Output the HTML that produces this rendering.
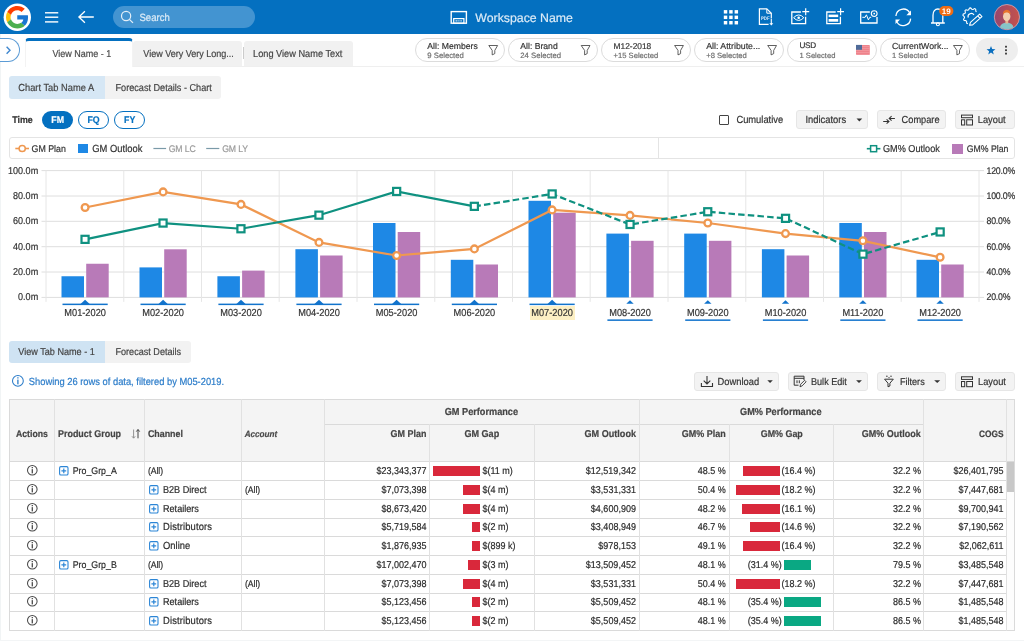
<!DOCTYPE html>
<html><head><meta charset="utf-8"><title>Workspace</title>
<style>
html,body{margin:0;padding:0;}
body{width:1024px;height:641px;overflow:hidden;background:#f3f5f6;font-family:"Liberation Sans",sans-serif;position:relative;text-rendering:geometricPrecision;-webkit-text-stroke:0.18px;}
div{box-sizing:border-box;}
svg{position:absolute;left:0;top:0;overflow:visible;}
</style></head><body><div id="root" style="position:absolute;left:0;top:0;width:1024px;height:641px;will-change:transform;">
<div style="position:absolute;left:0.00px;top:34.00px;width:1024.00px;height:606.00px;background:#fff;border-left:1px solid #f1f4f5;"></div>
<div style="position:absolute;left:0.00px;top:0.00px;width:1024.00px;height:34.00px;background:#0470c0;"></div>
<div style="position:absolute;left:112.50px;top:6.00px;width:142.20px;height:22.40px;background:#4394d1;border-radius:12px;"></div>
<div style="position:absolute;top:11.00px;height:16px;line-height:16px;font-size:9.566px;font-weight:400;color:#dcebf7;white-space:nowrap;transform:scaleY(1.1);left:139.50px;">Search</div>
<div style="position:absolute;top:10.00px;height:16px;line-height:16px;font-size:12.325px;font-weight:400;color:#dcebf7;white-space:nowrap;left:475.30px;">Workspace Name</div>
<div style="position:absolute;left:0.00px;top:38.00px;width:19.60px;height:24.00px;border:1px solid #5b9bd5;border-left:none;border-radius:0 12px 12px 0;background:#fff;"></div>
<div style="position:absolute;left:25.60px;top:66.00px;width:998.40px;height:1.00px;background:#efefef;"></div>
<div style="position:absolute;left:25.40px;top:38.00px;width:107.60px;height:29.00px;background:#fff;border-top:3px solid #0470c0;border-radius:4px 4px 0 0;border-left:1px solid #f3f3f3;border-right:1px solid #f3f3f3;"></div>
<div style="position:absolute;left:133.00px;top:41.00px;width:109.00px;height:25.40px;background:#f1f1f1;border-radius:3px 3px 0 0;"></div>
<div style="position:absolute;left:244.40px;top:41.00px;width:108.60px;height:25.40px;background:#f1f1f1;border-radius:3px 3px 0 0;"></div>
<div style="position:absolute;left:243.00px;top:47.00px;width:1.00px;height:12.00px;background:#ccc;"></div>
<div style="position:absolute;top:45.80px;height:16px;line-height:16px;font-size:9.005px;font-weight:400;color:#4a4a4a;white-space:nowrap;transform:scaleY(1.1);left:52.50px;">View Name - 1</div>
<div style="position:absolute;top:45.80px;height:16px;line-height:16px;font-size:9.03px;font-weight:400;color:#444;white-space:nowrap;transform:scaleY(1.1);left:143.30px;">View Very Very Long...</div>
<div style="position:absolute;top:45.80px;height:16px;line-height:16px;font-size:9.234px;font-weight:400;color:#444;white-space:nowrap;transform:scaleY(1.1);left:253.00px;">Long View Name Text</div>
<div style="position:absolute;left:415.00px;top:38.20px;width:90.30px;height:24.00px;border:1px solid #dcdcdc;border-radius:12px;background:#fff;"></div>
<div style="position:absolute;top:37.70px;height:16px;line-height:16px;font-size:8.668px;font-weight:400;color:#333;white-space:nowrap;left:427.30px;">All: Members</div>
<div style="position:absolute;top:47.80px;height:16px;line-height:16px;font-size:7.731px;font-weight:400;color:#6e6e6e;white-space:nowrap;left:427.30px;">9 Selected</div>
<div style="position:absolute;left:508.00px;top:38.20px;width:89.70px;height:24.00px;border:1px solid #dcdcdc;border-radius:12px;background:#fff;"></div>
<div style="position:absolute;top:37.70px;height:16px;line-height:16px;font-size:8.637px;font-weight:400;color:#333;white-space:nowrap;left:520.30px;">All: Brand</div>
<div style="position:absolute;top:47.80px;height:16px;line-height:16px;font-size:7.732px;font-weight:400;color:#6e6e6e;white-space:nowrap;left:520.30px;">24 Selected</div>
<div style="position:absolute;left:600.70px;top:38.20px;width:90.30px;height:24.00px;border:1px solid #dcdcdc;border-radius:12px;background:#fff;"></div>
<div style="position:absolute;top:37.70px;height:16px;line-height:16px;font-size:8.361px;font-weight:400;color:#333;white-space:nowrap;left:613.60px;">M12-2018</div>
<div style="position:absolute;top:47.80px;height:16px;line-height:16px;font-size:7.628px;font-weight:400;color:#6e6e6e;white-space:nowrap;left:613.60px;">+15 Selected</div>
<div style="position:absolute;left:694.20px;top:38.20px;width:89.80px;height:24.00px;border:1px solid #dcdcdc;border-radius:12px;background:#fff;"></div>
<div style="position:absolute;top:37.70px;height:16px;line-height:16px;font-size:8.78px;font-weight:400;color:#333;white-space:nowrap;left:706.20px;">All: Attribute...</div>
<div style="position:absolute;top:47.80px;height:16px;line-height:16px;font-size:7.654px;font-weight:400;color:#6e6e6e;white-space:nowrap;left:706.20px;">+8 Selected</div>
<div style="position:absolute;left:787.00px;top:38.20px;width:90.20px;height:24.00px;border:1px solid #dcdcdc;border-radius:12px;background:#fff;"></div>
<div style="position:absolute;top:37.70px;height:16px;line-height:16px;font-size:8.178px;font-weight:400;color:#333;white-space:nowrap;letter-spacing:-0.348px;left:799.50px;">USD</div>
<div style="position:absolute;top:47.80px;height:16px;line-height:16px;font-size:7.604px;font-weight:400;color:#6e6e6e;white-space:nowrap;left:799.50px;">1 Selected</div>
<div style="position:absolute;left:880.00px;top:38.20px;width:90.00px;height:24.00px;border:1px solid #dcdcdc;border-radius:12px;background:#fff;"></div>
<div style="position:absolute;top:37.70px;height:16px;line-height:16px;font-size:8.727px;font-weight:400;color:#333;white-space:nowrap;left:892.00px;">CurrentWork...</div>
<div style="position:absolute;top:47.80px;height:16px;line-height:16px;font-size:7.604px;font-weight:400;color:#6e6e6e;white-space:nowrap;left:892.00px;">1 Selected</div>
<div style="position:absolute;left:975.90px;top:38.30px;width:42.40px;height:23.40px;background:#eee;border-radius:12px;"></div>
<div style="position:absolute;left:8.90px;top:76.00px;width:95.90px;height:22.80px;background:#d6e7f5;border-radius:3px 0 0 3px;"></div>
<div style="position:absolute;left:104.80px;top:76.00px;width:116.70px;height:22.80px;background:#f2f2f2;border-radius:0 3px 3px 0;"></div>
<div style="position:absolute;top:79.60px;height:16px;line-height:16px;font-size:9.309px;font-weight:400;color:#444;white-space:nowrap;transform:scaleY(1.1);left:18.30px;">Chart Tab Name A</div>
<div style="position:absolute;top:79.60px;height:16px;line-height:16px;font-size:9.139px;font-weight:400;color:#444;white-space:nowrap;transform:scaleY(1.1);left:115.50px;">Forecast Details - Chart</div>
<div style="position:absolute;top:112.00px;height:16px;line-height:16px;font-size:8.9px;font-weight:700;color:#333;white-space:nowrap;transform:scaleY(1.1);left:12.20px;">Time</div>
<div style="position:absolute;left:42.20px;top:111.00px;width:30.90px;height:18.30px;background:#0470c0;border-radius:10px;"></div>
<div style="position:absolute;left:77.80px;top:111.00px;width:31.60px;height:18.30px;background:#fff;border:1px solid #0470c0;border-radius:10px;"></div>
<div style="position:absolute;left:114.10px;top:111.00px;width:31.20px;height:18.30px;background:#fff;border:1px solid #0470c0;border-radius:10px;"></div>
<div style="position:absolute;top:112.20px;height:16px;line-height:16px;font-size:8.8px;font-weight:700;color:#fff;white-space:nowrap;transform:scaleY(1.1);left:-92.35px;width:300px;text-align:center;">FM</div>
<div style="position:absolute;top:112.20px;height:16px;line-height:16px;font-size:8.8px;font-weight:700;color:#0470c0;white-space:nowrap;transform:scaleY(1.1);left:-56.40px;width:300px;text-align:center;">FQ</div>
<div style="position:absolute;top:112.20px;height:16px;line-height:16px;font-size:8.8px;font-weight:700;color:#0470c0;white-space:nowrap;transform:scaleY(1.1);left:-20.30px;width:300px;text-align:center;">FY</div>
<div style="position:absolute;left:719.00px;top:115.00px;width:10.40px;height:10.00px;border:1px solid #444;border-radius:1px;background:#fff;"></div>
<div style="position:absolute;top:112.00px;height:16px;line-height:16px;font-size:9.354px;font-weight:400;color:#333;white-space:nowrap;transform:scaleY(1.1);left:736.40px;">Cumulative</div>
<div style="position:absolute;left:795.90px;top:110.40px;width:72.50px;height:18.70px;background:#f3f3f3;border:1px solid #e6e6e6;border-radius:3px;"></div>
<div style="position:absolute;top:112.00px;height:16px;line-height:16px;font-size:9.38px;font-weight:400;color:#333;white-space:nowrap;letter-spacing:0.013px;transform:scaleY(1.1);left:805.40px;">Indicators</div>
<div style="position:absolute;left:876.60px;top:110.40px;width:69.60px;height:18.70px;background:#f3f3f3;border:1px solid #e6e6e6;border-radius:3px;"></div>
<div style="position:absolute;top:112.00px;height:16px;line-height:16px;font-size:9.239px;font-weight:400;color:#333;white-space:nowrap;transform:scaleY(1.1);left:901.60px;">Compare</div>
<div style="position:absolute;left:954.70px;top:110.40px;width:60.20px;height:18.70px;background:#f3f3f3;border:1px solid #e6e6e6;border-radius:3px;"></div>
<div style="position:absolute;top:112.00px;height:16px;line-height:16px;font-size:9.29px;font-weight:400;color:#333;white-space:nowrap;transform:scaleY(1.1);left:977.80px;">Layout</div>
<div style="position:absolute;left:8.70px;top:137.40px;width:1006.30px;height:21.20px;border:1px solid #e4e4e4;border-radius:3px;"></div>
<div style="position:absolute;left:657.60px;top:137.40px;width:1.00px;height:21.20px;background:#e4e4e4;"></div>
<div style="position:absolute;top:140.50px;height:16px;line-height:16px;font-size:8.817px;font-weight:400;color:#333;white-space:nowrap;transform:scaleY(1.1);left:31.60px;">GM Plan</div>
<div style="position:absolute;left:78.30px;top:143.70px;width:10.00px;height:9.70px;background:#1e88e5;"></div>
<div style="position:absolute;top:140.50px;height:16px;line-height:16px;font-size:9.38px;font-weight:400;color:#333;white-space:nowrap;letter-spacing:0.005px;transform:scaleY(1.1);left:92.30px;">GM Outlook</div>
<div style="position:absolute;top:140.50px;height:16px;line-height:16px;font-size:8.695px;font-weight:400;color:#999;white-space:nowrap;letter-spacing:-0.128px;transform:scaleY(1.1);left:168.70px;">GM LC</div>
<div style="position:absolute;top:140.50px;height:16px;line-height:16px;font-size:8.695px;font-weight:400;color:#999;white-space:nowrap;letter-spacing:-0.185px;transform:scaleY(1.1);left:222.30px;">GM LY</div>
<div style="position:absolute;top:140.50px;height:16px;line-height:16px;font-size:9.141px;font-weight:400;color:#333;white-space:nowrap;transform:scaleY(1.1);left:883.00px;">GM% Outlook</div>
<div style="position:absolute;left:952.20px;top:143.70px;width:10.50px;height:10.10px;background:#b87ab8;"></div>
<div style="position:absolute;top:140.50px;height:16px;line-height:16px;font-size:8.723px;font-weight:400;color:#333;white-space:nowrap;transform:scaleY(1.1);left:966.80px;">GM% Plan</div>
<div style="position:absolute;left:529.70px;top:305.50px;width:44.90px;height:14.30px;background:#fdf0c4;"></div>
<svg width="1024" height="641" viewBox="0 0 1024 641">
<line x1="41.5" y1="170.6" x2="984" y2="170.6" stroke="#dedede" stroke-width="1"/>
<line x1="41.5" y1="196.0" x2="984" y2="196.0" stroke="#dedede" stroke-width="1"/>
<line x1="41.5" y1="221.3" x2="984" y2="221.3" stroke="#dedede" stroke-width="1"/>
<line x1="41.5" y1="246.7" x2="984" y2="246.7" stroke="#dedede" stroke-width="1"/>
<line x1="41.5" y1="272.0" x2="984" y2="272.0" stroke="#dedede" stroke-width="1"/>
<line x1="41.5" y1="297.4" x2="984" y2="297.4" stroke="#dedede" stroke-width="1"/>
<line x1="46.0" y1="170.6" x2="46.0" y2="301.9" stroke="#e6e6e6" stroke-width="1"/>
<line x1="123.8" y1="170.6" x2="123.8" y2="301.9" stroke="#e6e6e6" stroke-width="1"/>
<line x1="201.5" y1="170.6" x2="201.5" y2="301.9" stroke="#e6e6e6" stroke-width="1"/>
<line x1="279.2" y1="170.6" x2="279.2" y2="301.9" stroke="#e6e6e6" stroke-width="1"/>
<line x1="357.0" y1="170.6" x2="357.0" y2="301.9" stroke="#e6e6e6" stroke-width="1"/>
<line x1="434.8" y1="170.6" x2="434.8" y2="301.9" stroke="#e6e6e6" stroke-width="1"/>
<line x1="512.5" y1="170.6" x2="512.5" y2="301.9" stroke="#e6e6e6" stroke-width="1"/>
<line x1="590.2" y1="170.6" x2="590.2" y2="301.9" stroke="#e6e6e6" stroke-width="1"/>
<line x1="668.0" y1="170.6" x2="668.0" y2="301.9" stroke="#e6e6e6" stroke-width="1"/>
<line x1="745.8" y1="170.6" x2="745.8" y2="301.9" stroke="#e6e6e6" stroke-width="1"/>
<line x1="823.5" y1="170.6" x2="823.5" y2="301.9" stroke="#e6e6e6" stroke-width="1"/>
<line x1="901.2" y1="170.6" x2="901.2" y2="301.9" stroke="#e6e6e6" stroke-width="1"/>
<line x1="979.0" y1="170.6" x2="979.0" y2="301.9" stroke="#e6e6e6" stroke-width="1"/>
<rect x="61.5" y="276.25" width="22.5" height="21.1" fill="#1e88e5"/>
<rect x="86.2" y="263.75" width="22.5" height="33.6" fill="#b87ab8"/>
<rect x="139.5" y="267.4" width="22.5" height="30.0" fill="#1e88e5"/>
<rect x="164.2" y="249.3" width="22.5" height="48.1" fill="#b87ab8"/>
<rect x="217.4" y="276.25" width="22.5" height="21.1" fill="#1e88e5"/>
<rect x="242.1" y="270.6" width="22.5" height="26.8" fill="#b87ab8"/>
<rect x="295.4" y="249.2" width="22.5" height="48.2" fill="#1e88e5"/>
<rect x="320.1" y="255.5" width="22.5" height="41.9" fill="#b87ab8"/>
<rect x="373.0" y="223" width="22.5" height="74.4" fill="#1e88e5"/>
<rect x="397.7" y="232" width="22.5" height="65.4" fill="#b87ab8"/>
<rect x="450.8" y="259.8" width="22.5" height="37.6" fill="#1e88e5"/>
<rect x="475.5" y="264.5" width="22.5" height="32.9" fill="#b87ab8"/>
<rect x="528.5" y="200.8" width="22.5" height="96.6" fill="#1e88e5"/>
<rect x="553.2" y="212.7" width="22.5" height="84.7" fill="#b87ab8"/>
<rect x="606.4" y="233.6" width="22.5" height="63.8" fill="#1e88e5"/>
<rect x="631.1" y="240.8" width="22.5" height="56.6" fill="#b87ab8"/>
<rect x="684.2" y="233.6" width="22.5" height="63.8" fill="#1e88e5"/>
<rect x="708.9" y="240.8" width="22.5" height="56.6" fill="#b87ab8"/>
<rect x="761.9" y="249.2" width="22.5" height="48.2" fill="#1e88e5"/>
<rect x="786.6" y="255.5" width="22.5" height="41.9" fill="#b87ab8"/>
<rect x="839.3" y="223" width="22.5" height="74.4" fill="#1e88e5"/>
<rect x="864.0" y="232" width="22.5" height="65.4" fill="#b87ab8"/>
<rect x="916.5" y="259.8" width="22.5" height="37.6" fill="#1e88e5"/>
<rect x="941.2" y="264.5" width="22.5" height="32.9" fill="#b87ab8"/>
<polyline points="85.1,207.5 163.1,191.9 241.0,204.4 319.0,242.4 396.6,255.5 474.4,248.9 552.1,209.9 630.0,215.4 707.8,223 785.5,233.6 862.9,240.8 940.1,257.3" fill="none" stroke="#ef9850" stroke-width="2.2"/>
<polyline points="85.1,239.3 163.1,223.1 241.0,228.75 319.0,215.2 396.6,191.5 474.4,206.4" fill="none" stroke="#0f9180" stroke-width="2.2"/>
<polyline points="474.4,206.4 552.1,194 630.0,224.5 707.8,211.8 785.5,218.3 862.9,254.2 940.1,232" fill="none" stroke="#0f9180" stroke-width="2.2" stroke-dasharray="6.5 3.2"/>
<circle cx="85.1" cy="207.5" r="3.4" fill="#fff" stroke="#ef9850" stroke-width="2.3"/>
<circle cx="163.1" cy="191.9" r="3.4" fill="#fff" stroke="#ef9850" stroke-width="2.3"/>
<circle cx="241.0" cy="204.4" r="3.4" fill="#fff" stroke="#ef9850" stroke-width="2.3"/>
<circle cx="319.0" cy="242.4" r="3.4" fill="#fff" stroke="#ef9850" stroke-width="2.3"/>
<circle cx="396.6" cy="255.5" r="3.4" fill="#fff" stroke="#ef9850" stroke-width="2.3"/>
<circle cx="474.4" cy="248.9" r="3.4" fill="#fff" stroke="#ef9850" stroke-width="2.3"/>
<circle cx="552.1" cy="209.9" r="3.4" fill="#fff" stroke="#ef9850" stroke-width="2.3"/>
<circle cx="630.0" cy="215.4" r="3.4" fill="#fff" stroke="#ef9850" stroke-width="2.3"/>
<circle cx="707.8" cy="223" r="3.4" fill="#fff" stroke="#ef9850" stroke-width="2.3"/>
<circle cx="785.5" cy="233.6" r="3.4" fill="#fff" stroke="#ef9850" stroke-width="2.3"/>
<circle cx="862.9" cy="240.8" r="3.4" fill="#fff" stroke="#ef9850" stroke-width="2.3"/>
<circle cx="940.1" cy="257.3" r="3.4" fill="#fff" stroke="#ef9850" stroke-width="2.3"/>
<rect x="81.5" y="235.8" width="7.1" height="7.1" fill="#fff" stroke="#0f9180" stroke-width="2.2"/>
<rect x="159.5" y="219.5" width="7.1" height="7.1" fill="#fff" stroke="#0f9180" stroke-width="2.2"/>
<rect x="237.4" y="225.2" width="7.1" height="7.1" fill="#fff" stroke="#0f9180" stroke-width="2.2"/>
<rect x="315.4" y="211.6" width="7.1" height="7.1" fill="#fff" stroke="#0f9180" stroke-width="2.2"/>
<rect x="393.1" y="187.9" width="7.1" height="7.1" fill="#fff" stroke="#0f9180" stroke-width="2.2"/>
<rect x="470.8" y="202.8" width="7.1" height="7.1" fill="#fff" stroke="#0f9180" stroke-width="2.2"/>
<rect x="548.6" y="190.4" width="7.1" height="7.1" fill="#fff" stroke="#0f9180" stroke-width="2.2"/>
<rect x="626.5" y="220.9" width="7.1" height="7.1" fill="#fff" stroke="#0f9180" stroke-width="2.2"/>
<rect x="704.2" y="208.2" width="7.1" height="7.1" fill="#fff" stroke="#0f9180" stroke-width="2.2"/>
<rect x="782.0" y="214.8" width="7.1" height="7.1" fill="#fff" stroke="#0f9180" stroke-width="2.2"/>
<rect x="859.4" y="250.6" width="7.1" height="7.1" fill="#fff" stroke="#0f9180" stroke-width="2.2"/>
<rect x="936.6" y="228.4" width="7.1" height="7.1" fill="#fff" stroke="#0f9180" stroke-width="2.2"/>
<rect x="62.5" y="303.6" width="45.2" height="1.5" fill="#1173cc"/>
<path d="M80.5 304 L85.1 299.8 L89.7 304Z" fill="#1173cc"/>
<rect x="140.5" y="303.6" width="45.2" height="1.5" fill="#1173cc"/>
<path d="M158.5 304 L163.1 299.8 L167.7 304Z" fill="#1173cc"/>
<rect x="218.4" y="303.6" width="45.2" height="1.5" fill="#1173cc"/>
<path d="M236.4 304 L241.0 299.8 L245.6 304Z" fill="#1173cc"/>
<rect x="296.4" y="303.6" width="45.2" height="1.5" fill="#1173cc"/>
<path d="M314.4 304 L319.0 299.8 L323.6 304Z" fill="#1173cc"/>
<rect x="374.0" y="303.6" width="45.2" height="1.5" fill="#1173cc"/>
<path d="M392.0 304 L396.6 299.8 L401.2 304Z" fill="#1173cc"/>
<rect x="451.8" y="303.6" width="45.2" height="1.5" fill="#1173cc"/>
<path d="M469.8 304 L474.4 299.8 L479.0 304Z" fill="#1173cc"/>
<rect x="529.5" y="303.6" width="45.2" height="1.5" fill="#1173cc"/>
<path d="M547.5 304 L552.1 299.8 L556.7 304Z" fill="#1173cc"/>
<path d="M626.3 303.8 L630.0 300.2 L633.7 303.8Z" fill="#1173cc"/>
<rect x="607.4" y="319.4" width="45.2" height="1.5" fill="#1173cc"/>
<path d="M704.1 303.8 L707.8 300.2 L711.5 303.8Z" fill="#1173cc"/>
<rect x="685.2" y="319.4" width="45.2" height="1.5" fill="#1173cc"/>
<path d="M781.8 303.8 L785.5 300.2 L789.2 303.8Z" fill="#1173cc"/>
<rect x="762.9" y="319.4" width="45.2" height="1.5" fill="#1173cc"/>
<path d="M859.2 303.8 L862.9 300.2 L866.6 303.8Z" fill="#1173cc"/>
<rect x="840.3" y="319.4" width="45.2" height="1.5" fill="#1173cc"/>
<path d="M936.4 303.8 L940.1 300.2 L943.8 303.8Z" fill="#1173cc"/>
<rect x="917.5" y="319.4" width="45.2" height="1.5" fill="#1173cc"/>
<line x1="15.3" y1="148.5" x2="29" y2="148.5" stroke="#ef9850" stroke-width="1.6"/><circle cx="22.2" cy="148.5" r="3.1" fill="#fff" stroke="#ef9850" stroke-width="1.5"/>
<line x1="153.4" y1="148.5" x2="166.1" y2="148.5" stroke="#7a9aa8" stroke-width="1.2"/>
<line x1="206.2" y1="148.5" x2="219.3" y2="148.5" stroke="#7a9aa8" stroke-width="1.2"/>
<line x1="866.8" y1="148.7" x2="880.4" y2="148.7" stroke="#0f9180" stroke-width="1.6"/><rect x="870.6" y="145.7" width="6" height="6" fill="#fff" stroke="#0f9180" stroke-width="1.5"/>
</svg>
<div style="position:absolute;top:162.50px;height:16px;line-height:16px;font-size:9.05px;font-weight:400;color:#333;white-space:nowrap;transform:scaleY(1.1);right:985.80px;text-align:right;">100.0m</div>
<div style="position:absolute;top:187.86px;height:16px;line-height:16px;font-size:9.05px;font-weight:400;color:#333;white-space:nowrap;transform:scaleY(1.1);right:985.80px;text-align:right;">80.0m</div>
<div style="position:absolute;top:213.22px;height:16px;line-height:16px;font-size:9.05px;font-weight:400;color:#333;white-space:nowrap;transform:scaleY(1.1);right:985.80px;text-align:right;">60.0m</div>
<div style="position:absolute;top:238.58px;height:16px;line-height:16px;font-size:9.05px;font-weight:400;color:#333;white-space:nowrap;transform:scaleY(1.1);right:985.80px;text-align:right;">40.0m</div>
<div style="position:absolute;top:263.94px;height:16px;line-height:16px;font-size:9.05px;font-weight:400;color:#333;white-space:nowrap;transform:scaleY(1.1);right:985.80px;text-align:right;">20.0m</div>
<div style="position:absolute;top:289.30px;height:16px;line-height:16px;font-size:9.05px;font-weight:400;color:#333;white-space:nowrap;transform:scaleY(1.1);right:985.80px;text-align:right;">0.0m</div>
<div style="position:absolute;top:162.50px;height:16px;line-height:16px;font-size:8.75px;font-weight:400;color:#333;white-space:nowrap;letter-spacing:-0.2px;transform:scaleY(1.1);left:986.50px;">120.0%</div>
<div style="position:absolute;top:187.86px;height:16px;line-height:16px;font-size:8.75px;font-weight:400;color:#333;white-space:nowrap;letter-spacing:-0.2px;transform:scaleY(1.1);left:986.50px;">100.0%</div>
<div style="position:absolute;top:213.22px;height:16px;line-height:16px;font-size:8.75px;font-weight:400;color:#333;white-space:nowrap;letter-spacing:-0.2px;transform:scaleY(1.1);left:986.50px;">80.0%</div>
<div style="position:absolute;top:238.58px;height:16px;line-height:16px;font-size:8.75px;font-weight:400;color:#333;white-space:nowrap;letter-spacing:-0.2px;transform:scaleY(1.1);left:986.50px;">60.0%</div>
<div style="position:absolute;top:263.94px;height:16px;line-height:16px;font-size:8.75px;font-weight:400;color:#333;white-space:nowrap;letter-spacing:-0.2px;transform:scaleY(1.1);left:986.50px;">40.0%</div>
<div style="position:absolute;top:289.30px;height:16px;line-height:16px;font-size:8.75px;font-weight:400;color:#333;white-space:nowrap;letter-spacing:-0.2px;transform:scaleY(1.1);left:986.50px;">20.0%</div>
<div style="position:absolute;top:304.80px;height:16px;line-height:16px;font-size:9.25px;font-weight:400;color:#333;white-space:nowrap;transform:scaleY(1.1);left:-64.90px;width:300px;text-align:center;">M01-2020</div>
<div style="position:absolute;top:304.80px;height:16px;line-height:16px;font-size:9.25px;font-weight:400;color:#333;white-space:nowrap;transform:scaleY(1.1);left:13.10px;width:300px;text-align:center;">M02-2020</div>
<div style="position:absolute;top:304.80px;height:16px;line-height:16px;font-size:9.25px;font-weight:400;color:#333;white-space:nowrap;transform:scaleY(1.1);left:91.00px;width:300px;text-align:center;">M03-2020</div>
<div style="position:absolute;top:304.80px;height:16px;line-height:16px;font-size:9.25px;font-weight:400;color:#333;white-space:nowrap;transform:scaleY(1.1);left:169.00px;width:300px;text-align:center;">M04-2020</div>
<div style="position:absolute;top:304.80px;height:16px;line-height:16px;font-size:9.25px;font-weight:400;color:#333;white-space:nowrap;transform:scaleY(1.1);left:246.60px;width:300px;text-align:center;">M05-2020</div>
<div style="position:absolute;top:304.80px;height:16px;line-height:16px;font-size:9.25px;font-weight:400;color:#333;white-space:nowrap;transform:scaleY(1.1);left:324.40px;width:300px;text-align:center;">M06-2020</div>
<div style="position:absolute;top:304.80px;height:16px;line-height:16px;font-size:9.25px;font-weight:400;color:#333;white-space:nowrap;transform:scaleY(1.1);left:402.10px;width:300px;text-align:center;">M07-2020</div>
<div style="position:absolute;top:304.80px;height:16px;line-height:16px;font-size:9.25px;font-weight:400;color:#333;white-space:nowrap;transform:scaleY(1.1);left:480.00px;width:300px;text-align:center;">M08-2020</div>
<div style="position:absolute;top:304.80px;height:16px;line-height:16px;font-size:9.25px;font-weight:400;color:#333;white-space:nowrap;transform:scaleY(1.1);left:557.80px;width:300px;text-align:center;">M09-2020</div>
<div style="position:absolute;top:304.80px;height:16px;line-height:16px;font-size:9.25px;font-weight:400;color:#333;white-space:nowrap;transform:scaleY(1.1);left:635.50px;width:300px;text-align:center;">M10-2020</div>
<div style="position:absolute;top:304.80px;height:16px;line-height:16px;font-size:9.25px;font-weight:400;color:#333;white-space:nowrap;transform:scaleY(1.1);left:712.90px;width:300px;text-align:center;">M11-2020</div>
<div style="position:absolute;top:304.80px;height:16px;line-height:16px;font-size:9.25px;font-weight:400;color:#333;white-space:nowrap;transform:scaleY(1.1);left:790.10px;width:300px;text-align:center;">M12-2020</div>
<div style="position:absolute;left:8.90px;top:341.30px;width:95.90px;height:21.80px;background:#cfe3f3;border-radius:3px 0 0 3px;"></div>
<div style="position:absolute;left:104.80px;top:341.30px;width:86.20px;height:21.80px;background:#f2f2f2;border-radius:0 3px 3px 0;"></div>
<div style="position:absolute;top:344.30px;height:16px;line-height:16px;font-size:9.106px;font-weight:400;color:#444;white-space:nowrap;transform:scaleY(1.1);left:18.30px;">View Tab Name - 1</div>
<div style="position:absolute;top:344.30px;height:16px;line-height:16px;font-size:9.094px;font-weight:400;color:#444;white-space:nowrap;transform:scaleY(1.1);left:115.50px;">Forecast Details</div>
<div style="position:absolute;top:374.00px;height:16px;line-height:16px;font-size:9.353px;font-weight:400;color:#2b7cc9;white-space:nowrap;transform:scaleY(1.1);left:28.80px;">Showing 26 rows of data, filtered by M05-2019.</div>
<div style="position:absolute;left:694.40px;top:372.40px;width:84.70px;height:18.50px;background:#f3f3f3;border:1px solid #e6e6e6;border-radius:3px;"></div>
<div style="position:absolute;top:373.60px;height:16px;line-height:16px;font-size:9.331px;font-weight:400;color:#333;white-space:nowrap;transform:scaleY(1.1);left:717.60px;">Download</div>
<div style="position:absolute;left:787.50px;top:372.40px;width:80.60px;height:18.50px;background:#f3f3f3;border:1px solid #e6e6e6;border-radius:3px;"></div>
<div style="position:absolute;top:373.60px;height:16px;line-height:16px;font-size:9.119px;font-weight:400;color:#333;white-space:nowrap;transform:scaleY(1.1);left:811.00px;">Bulk Edit</div>
<div style="position:absolute;left:876.50px;top:372.40px;width:69.90px;height:18.50px;background:#f3f3f3;border:1px solid #e6e6e6;border-radius:3px;"></div>
<div style="position:absolute;top:373.60px;height:16px;line-height:16px;font-size:9.071px;font-weight:400;color:#333;white-space:nowrap;transform:scaleY(1.1);left:900.00px;">Filters</div>
<div style="position:absolute;left:954.80px;top:372.40px;width:60.40px;height:18.50px;background:#f3f3f3;border:1px solid #e6e6e6;border-radius:3px;"></div>
<div style="position:absolute;top:373.60px;height:16px;line-height:16px;font-size:9.29px;font-weight:400;color:#333;white-space:nowrap;transform:scaleY(1.1);left:978.00px;">Layout</div>
<div style="position:absolute;left:9.30px;top:399.00px;width:1005.70px;height:62.00px;background:#f4f4f4;"></div>
<div style="position:absolute;left:9.30px;top:461.00px;width:996.70px;height:169.00px;background:#fff;"></div>
<div style="position:absolute;left:1006.00px;top:461.00px;width:8.00px;height:169.00px;background:#fdfdfd;"></div>
<div style="position:absolute;left:1007.00px;top:462.00px;width:7.00px;height:30.00px;background:#c8c8c8;"></div>
<div style="position:absolute;left:9.30px;top:399.00px;width:1005.70px;height:1.00px;background:#dadada;"></div>
<div style="position:absolute;left:324.40px;top:424.00px;width:598.80px;height:1.00px;background:#dadada;"></div>
<div style="position:absolute;left:9.30px;top:461.00px;width:1005.70px;height:1.00px;background:#dadada;"></div>
<div style="position:absolute;left:9.30px;top:480.00px;width:996.70px;height:1.00px;background:#dadada;"></div>
<div style="position:absolute;left:9.30px;top:499.00px;width:996.70px;height:1.00px;background:#dadada;"></div>
<div style="position:absolute;left:9.30px;top:518.00px;width:996.70px;height:1.00px;background:#dadada;"></div>
<div style="position:absolute;left:9.30px;top:536.00px;width:996.70px;height:1.00px;background:#dadada;"></div>
<div style="position:absolute;left:9.30px;top:555.00px;width:996.70px;height:1.00px;background:#dadada;"></div>
<div style="position:absolute;left:9.30px;top:574.00px;width:996.70px;height:1.00px;background:#dadada;"></div>
<div style="position:absolute;left:9.30px;top:593.00px;width:996.70px;height:1.00px;background:#dadada;"></div>
<div style="position:absolute;left:9.30px;top:611.00px;width:996.70px;height:1.00px;background:#dadada;"></div>
<div style="position:absolute;left:9.30px;top:630.00px;width:1005.70px;height:1.00px;background:#dadada;"></div>
<div style="position:absolute;left:9.30px;top:399.00px;width:1.00px;height:232.00px;background:#dadada;"></div>
<div style="position:absolute;left:54.10px;top:399.00px;width:1.00px;height:232.00px;background:#e1e1e1;"></div>
<div style="position:absolute;left:144.40px;top:399.00px;width:1.00px;height:232.00px;background:#e1e1e1;"></div>
<div style="position:absolute;left:241.00px;top:399.00px;width:1.00px;height:232.00px;background:#e1e1e1;"></div>
<div style="position:absolute;left:324.40px;top:399.00px;width:1.00px;height:232.00px;background:#e1e1e1;"></div>
<div style="position:absolute;left:429.00px;top:424.00px;width:1.00px;height:207.00px;background:#e1e1e1;"></div>
<div style="position:absolute;left:534.20px;top:424.00px;width:1.00px;height:207.00px;background:#e1e1e1;"></div>
<div style="position:absolute;left:639.00px;top:399.00px;width:1.00px;height:232.00px;background:#e1e1e1;"></div>
<div style="position:absolute;left:728.80px;top:424.00px;width:1.00px;height:207.00px;background:#e1e1e1;"></div>
<div style="position:absolute;left:833.40px;top:424.00px;width:1.00px;height:207.00px;background:#e1e1e1;"></div>
<div style="position:absolute;left:923.20px;top:399.00px;width:1.00px;height:232.00px;background:#e1e1e1;"></div>
<div style="position:absolute;left:1006.00px;top:399.00px;width:1.00px;height:232.00px;background:#e1e1e1;"></div>
<div style="position:absolute;left:1014.00px;top:399.00px;width:1.00px;height:232.00px;background:#dadada;"></div>
<div style="position:absolute;top:426.00px;height:16px;line-height:16px;font-size:8.702px;font-weight:700;color:#444;white-space:nowrap;transform:scaleY(1.1);left:16.00px;">Actions</div>
<div style="position:absolute;top:426.00px;height:16px;line-height:16px;font-size:8.948px;font-weight:700;color:#444;white-space:nowrap;transform:scaleY(1.1);left:58.00px;">Product Group</div>
<div style="position:absolute;top:426.00px;height:16px;line-height:16px;font-size:8.903px;font-weight:700;color:#444;white-space:nowrap;transform:scaleY(1.1);left:147.90px;">Channel</div>
<div style="position:absolute;top:426.50px;height:16px;line-height:16px;font-size:8.178px;font-weight:700;color:#4a4a4a;white-space:nowrap;font-style:italic;letter-spacing:-0.024px;transform:scaleY(1.1);left:244.70px;">Account</div>
<div style="position:absolute;top:404.30px;height:16px;line-height:16px;font-size:9.17px;font-weight:700;color:#444;white-space:nowrap;transform:scaleY(1.1);left:331.40px;width:300px;text-align:center;">GM Performance</div>
<div style="position:absolute;top:404.30px;height:16px;line-height:16px;font-size:9.17px;font-weight:700;color:#444;white-space:nowrap;transform:scaleY(1.1);left:630.80px;width:300px;text-align:center;">GM% Performance</div>
<div style="position:absolute;top:426.00px;height:16px;line-height:16px;font-size:8.977px;font-weight:700;color:#444;white-space:nowrap;transform:scaleY(1.1);right:597.50px;text-align:right;">GM Plan</div>
<div style="position:absolute;top:426.00px;height:16px;line-height:16px;font-size:9.08px;font-weight:700;color:#444;white-space:nowrap;transform:scaleY(1.1);left:331.80px;width:300px;text-align:center;">GM Gap</div>
<div style="position:absolute;top:426.00px;height:16px;line-height:16px;font-size:9.094px;font-weight:700;color:#444;white-space:nowrap;transform:scaleY(1.1);right:388.00px;text-align:right;">GM Outlook</div>
<div style="position:absolute;top:426.00px;height:16px;line-height:16px;font-size:9.0px;font-weight:700;color:#444;white-space:nowrap;transform:scaleY(1.1);right:298.20px;text-align:right;">GM% Plan</div>
<div style="position:absolute;top:426.00px;height:16px;line-height:16px;font-size:8.9px;font-weight:700;color:#444;white-space:nowrap;transform:scaleY(1.1);left:631.80px;width:300px;text-align:center;">GM% Gap</div>
<div style="position:absolute;top:426.00px;height:16px;line-height:16px;font-size:9.02px;font-weight:700;color:#444;white-space:nowrap;transform:scaleY(1.1);right:103.20px;text-align:right;">GM% Outlook</div>
<div style="position:absolute;top:426.00px;height:16px;line-height:16px;font-size:8.4px;font-weight:700;color:#444;white-space:nowrap;transform:scaleY(1.1);right:20.40px;text-align:right;">COGS</div>
<svg style="left:25.7px;top:464.3px" width="12.6" height="12.6" viewBox="-6.3 -6.3 12.6 12.6"><circle cx="0" cy="0" r="4.80" fill="none" stroke="#4a4a4a" stroke-width="1.05"/><rect x="-0.65" y="-3.29" width="1.3" height="1.25" fill="#4a4a4a"/><rect x="-0.65" y="-1.17" width="1.3" height="4.24" fill="#4a4a4a"/></svg>
<svg style="left:59.0px;top:466.0px" width="10" height="10" viewBox="0 0 10 10"><rect x="0.6" y="0.6" width="8.4" height="8.4" rx="1.3" fill="#fff" stroke="#2b85d6" stroke-width="1.1"/><path d="M2.4 4.8 H7.2 M4.8 2.4 V7.2" stroke="#2b85d6" stroke-width="1.2"/></svg>
<div style="position:absolute;top:463.00px;height:16px;line-height:16px;font-size:8.826px;font-weight:400;color:#2b2b2b;white-space:nowrap;transform:scaleY(1.1);left:72.70px;">Pro_Grp_A</div>
<div style="position:absolute;top:463.00px;height:16px;line-height:16px;font-size:8.648px;font-weight:400;color:#2b2b2b;white-space:nowrap;letter-spacing:-0.053px;transform:scaleY(1.1);left:147.90px;">(All)</div>
<div style="position:absolute;top:463.00px;height:16px;line-height:16px;font-size:9.0px;font-weight:400;color:#2b2b2b;white-space:nowrap;transform:scaleY(1.1);right:597.50px;text-align:right;">$23,343,377</div>
<div style="position:absolute;left:432.50px;top:466.00px;width:47.50px;height:9.50px;background:#d9283b;"></div>
<div style="position:absolute;top:463.00px;height:16px;line-height:16px;font-size:9.0px;font-weight:400;color:#2b2b2b;white-space:nowrap;transform:scaleY(1.1);left:482.40px;">$(11 m)</div>
<div style="position:absolute;top:463.00px;height:16px;line-height:16px;font-size:9.0px;font-weight:400;color:#2b2b2b;white-space:nowrap;transform:scaleY(1.1);right:388.10px;text-align:right;">$12,519,342</div>
<div style="position:absolute;top:463.00px;height:16px;line-height:16px;font-size:9.0px;font-weight:400;color:#2b2b2b;white-space:nowrap;transform:scaleY(1.1);right:298.20px;text-align:right;">48.5 %</div>
<div style="position:absolute;left:743.00px;top:466.00px;width:37.00px;height:9.50px;background:#d9283b;"></div>
<div style="position:absolute;top:463.00px;height:16px;line-height:16px;font-size:9.0px;font-weight:400;color:#2b2b2b;white-space:nowrap;transform:scaleY(1.1);left:781.40px;">(16.4 %)</div>
<div style="position:absolute;top:463.00px;height:16px;line-height:16px;font-size:9.0px;font-weight:400;color:#2b2b2b;white-space:nowrap;transform:scaleY(1.1);right:102.90px;text-align:right;">32.2 %</div>
<div style="position:absolute;top:463.00px;height:16px;line-height:16px;font-size:9.0px;font-weight:400;color:#2b2b2b;white-space:nowrap;transform:scaleY(1.1);right:20.40px;text-align:right;">$26,401,795</div>
<svg style="left:25.7px;top:483.3px" width="12.6" height="12.6" viewBox="-6.3 -6.3 12.6 12.6"><circle cx="0" cy="0" r="4.80" fill="none" stroke="#4a4a4a" stroke-width="1.05"/><rect x="-0.65" y="-3.29" width="1.3" height="1.25" fill="#4a4a4a"/><rect x="-0.65" y="-1.17" width="1.3" height="4.24" fill="#4a4a4a"/></svg>
<svg style="left:149.0px;top:485.0px" width="10" height="10" viewBox="0 0 10 10"><rect x="0.6" y="0.6" width="8.4" height="8.4" rx="1.3" fill="#fff" stroke="#2b85d6" stroke-width="1.1"/><path d="M2.4 4.8 H7.2 M4.8 2.4 V7.2" stroke="#2b85d6" stroke-width="1.2"/></svg>
<div style="position:absolute;top:482.00px;height:16px;line-height:16px;font-size:9.112px;font-weight:400;color:#2b2b2b;white-space:nowrap;transform:scaleY(1.1);left:163.00px;">B2B Direct</div>
<div style="position:absolute;top:482.00px;height:16px;line-height:16px;font-size:8.648px;font-weight:400;color:#2b2b2b;white-space:nowrap;letter-spacing:-0.053px;transform:scaleY(1.1);left:245.00px;">(All)</div>
<div style="position:absolute;top:482.00px;height:16px;line-height:16px;font-size:9.0px;font-weight:400;color:#2b2b2b;white-space:nowrap;transform:scaleY(1.1);right:597.50px;text-align:right;">$7,073,398</div>
<div style="position:absolute;left:463.00px;top:485.00px;width:17.00px;height:9.50px;background:#d9283b;"></div>
<div style="position:absolute;top:482.00px;height:16px;line-height:16px;font-size:9.0px;font-weight:400;color:#2b2b2b;white-space:nowrap;transform:scaleY(1.1);left:482.40px;">$(4 m)</div>
<div style="position:absolute;top:482.00px;height:16px;line-height:16px;font-size:9.0px;font-weight:400;color:#2b2b2b;white-space:nowrap;transform:scaleY(1.1);right:388.10px;text-align:right;">$3,531,331</div>
<div style="position:absolute;top:482.00px;height:16px;line-height:16px;font-size:9.0px;font-weight:400;color:#2b2b2b;white-space:nowrap;transform:scaleY(1.1);right:298.20px;text-align:right;">50.4 %</div>
<div style="position:absolute;left:736.00px;top:485.00px;width:44.00px;height:9.50px;background:#d9283b;"></div>
<div style="position:absolute;top:482.00px;height:16px;line-height:16px;font-size:9.0px;font-weight:400;color:#2b2b2b;white-space:nowrap;transform:scaleY(1.1);left:781.40px;">(18.2 %)</div>
<div style="position:absolute;top:482.00px;height:16px;line-height:16px;font-size:9.0px;font-weight:400;color:#2b2b2b;white-space:nowrap;transform:scaleY(1.1);right:102.90px;text-align:right;">32.2 %</div>
<div style="position:absolute;top:482.00px;height:16px;line-height:16px;font-size:9.0px;font-weight:400;color:#2b2b2b;white-space:nowrap;transform:scaleY(1.1);right:20.40px;text-align:right;">$7,447,681</div>
<svg style="left:25.7px;top:502.3px" width="12.6" height="12.6" viewBox="-6.3 -6.3 12.6 12.6"><circle cx="0" cy="0" r="4.80" fill="none" stroke="#4a4a4a" stroke-width="1.05"/><rect x="-0.65" y="-3.29" width="1.3" height="1.25" fill="#4a4a4a"/><rect x="-0.65" y="-1.17" width="1.3" height="4.24" fill="#4a4a4a"/></svg>
<svg style="left:149.0px;top:504.0px" width="10" height="10" viewBox="0 0 10 10"><rect x="0.6" y="0.6" width="8.4" height="8.4" rx="1.3" fill="#fff" stroke="#2b85d6" stroke-width="1.1"/><path d="M2.4 4.8 H7.2 M4.8 2.4 V7.2" stroke="#2b85d6" stroke-width="1.2"/></svg>
<div style="position:absolute;top:501.00px;height:16px;line-height:16px;font-size:9.107px;font-weight:400;color:#2b2b2b;white-space:nowrap;transform:scaleY(1.1);left:163.00px;">Retailers</div>
<div style="position:absolute;top:501.00px;height:16px;line-height:16px;font-size:9.0px;font-weight:400;color:#2b2b2b;white-space:nowrap;transform:scaleY(1.1);right:597.50px;text-align:right;">$8,673,420</div>
<div style="position:absolute;left:463.00px;top:504.00px;width:17.00px;height:9.50px;background:#d9283b;"></div>
<div style="position:absolute;top:501.00px;height:16px;line-height:16px;font-size:9.0px;font-weight:400;color:#2b2b2b;white-space:nowrap;transform:scaleY(1.1);left:482.40px;">$(4 m)</div>
<div style="position:absolute;top:501.00px;height:16px;line-height:16px;font-size:9.0px;font-weight:400;color:#2b2b2b;white-space:nowrap;transform:scaleY(1.1);right:388.10px;text-align:right;">$4,600,909</div>
<div style="position:absolute;top:501.00px;height:16px;line-height:16px;font-size:9.0px;font-weight:400;color:#2b2b2b;white-space:nowrap;transform:scaleY(1.1);right:298.20px;text-align:right;">48.2 %</div>
<div style="position:absolute;left:742.00px;top:504.00px;width:38.00px;height:9.50px;background:#d9283b;"></div>
<div style="position:absolute;top:501.00px;height:16px;line-height:16px;font-size:9.0px;font-weight:400;color:#2b2b2b;white-space:nowrap;transform:scaleY(1.1);left:781.40px;">(16.1 %)</div>
<div style="position:absolute;top:501.00px;height:16px;line-height:16px;font-size:9.0px;font-weight:400;color:#2b2b2b;white-space:nowrap;transform:scaleY(1.1);right:102.90px;text-align:right;">32.2 %</div>
<div style="position:absolute;top:501.00px;height:16px;line-height:16px;font-size:9.0px;font-weight:400;color:#2b2b2b;white-space:nowrap;transform:scaleY(1.1);right:20.40px;text-align:right;">$9,700,941</div>
<svg style="left:25.7px;top:520.3px" width="12.6" height="12.6" viewBox="-6.3 -6.3 12.6 12.6"><circle cx="0" cy="0" r="4.80" fill="none" stroke="#4a4a4a" stroke-width="1.05"/><rect x="-0.65" y="-3.29" width="1.3" height="1.25" fill="#4a4a4a"/><rect x="-0.65" y="-1.17" width="1.3" height="4.24" fill="#4a4a4a"/></svg>
<svg style="left:149.0px;top:522.0px" width="10" height="10" viewBox="0 0 10 10"><rect x="0.6" y="0.6" width="8.4" height="8.4" rx="1.3" fill="#fff" stroke="#2b85d6" stroke-width="1.1"/><path d="M2.4 4.8 H7.2 M4.8 2.4 V7.2" stroke="#2b85d6" stroke-width="1.2"/></svg>
<div style="position:absolute;top:519.00px;height:16px;line-height:16px;font-size:9.38px;font-weight:400;color:#2b2b2b;white-space:nowrap;letter-spacing:0.144px;transform:scaleY(1.1);left:163.00px;">Distributors</div>
<div style="position:absolute;top:519.00px;height:16px;line-height:16px;font-size:9.0px;font-weight:400;color:#2b2b2b;white-space:nowrap;transform:scaleY(1.1);right:597.50px;text-align:right;">$5,719,584</div>
<div style="position:absolute;left:472.00px;top:522.00px;width:8.00px;height:9.50px;background:#d9283b;"></div>
<div style="position:absolute;top:519.00px;height:16px;line-height:16px;font-size:9.0px;font-weight:400;color:#2b2b2b;white-space:nowrap;transform:scaleY(1.1);left:482.40px;">$(2 m)</div>
<div style="position:absolute;top:519.00px;height:16px;line-height:16px;font-size:9.0px;font-weight:400;color:#2b2b2b;white-space:nowrap;transform:scaleY(1.1);right:388.10px;text-align:right;">$3,408,949</div>
<div style="position:absolute;top:519.00px;height:16px;line-height:16px;font-size:9.0px;font-weight:400;color:#2b2b2b;white-space:nowrap;transform:scaleY(1.1);right:298.20px;text-align:right;">46.7 %</div>
<div style="position:absolute;left:749.50px;top:522.00px;width:30.50px;height:9.50px;background:#d9283b;"></div>
<div style="position:absolute;top:519.00px;height:16px;line-height:16px;font-size:9.0px;font-weight:400;color:#2b2b2b;white-space:nowrap;transform:scaleY(1.1);left:781.40px;">(14.6 %)</div>
<div style="position:absolute;top:519.00px;height:16px;line-height:16px;font-size:9.0px;font-weight:400;color:#2b2b2b;white-space:nowrap;transform:scaleY(1.1);right:102.90px;text-align:right;">32.2 %</div>
<div style="position:absolute;top:519.00px;height:16px;line-height:16px;font-size:9.0px;font-weight:400;color:#2b2b2b;white-space:nowrap;transform:scaleY(1.1);right:20.40px;text-align:right;">$7,190,562</div>
<svg style="left:25.7px;top:539.3px" width="12.6" height="12.6" viewBox="-6.3 -6.3 12.6 12.6"><circle cx="0" cy="0" r="4.80" fill="none" stroke="#4a4a4a" stroke-width="1.05"/><rect x="-0.65" y="-3.29" width="1.3" height="1.25" fill="#4a4a4a"/><rect x="-0.65" y="-1.17" width="1.3" height="4.24" fill="#4a4a4a"/></svg>
<svg style="left:149.0px;top:541.0px" width="10" height="10" viewBox="0 0 10 10"><rect x="0.6" y="0.6" width="8.4" height="8.4" rx="1.3" fill="#fff" stroke="#2b85d6" stroke-width="1.1"/><path d="M2.4 4.8 H7.2 M4.8 2.4 V7.2" stroke="#2b85d6" stroke-width="1.2"/></svg>
<div style="position:absolute;top:538.00px;height:16px;line-height:16px;font-size:9.38px;font-weight:400;color:#2b2b2b;white-space:nowrap;letter-spacing:0.020px;transform:scaleY(1.1);left:163.00px;">Online</div>
<div style="position:absolute;top:538.00px;height:16px;line-height:16px;font-size:9.0px;font-weight:400;color:#2b2b2b;white-space:nowrap;transform:scaleY(1.1);right:597.50px;text-align:right;">$1,876,935</div>
<div style="position:absolute;left:472.00px;top:541.00px;width:8.00px;height:9.50px;background:#d9283b;"></div>
<div style="position:absolute;top:538.00px;height:16px;line-height:16px;font-size:9.0px;font-weight:400;color:#2b2b2b;white-space:nowrap;transform:scaleY(1.1);left:482.40px;">$(899 k)</div>
<div style="position:absolute;top:538.00px;height:16px;line-height:16px;font-size:9.0px;font-weight:400;color:#2b2b2b;white-space:nowrap;transform:scaleY(1.1);right:388.10px;text-align:right;">$978,153</div>
<div style="position:absolute;top:538.00px;height:16px;line-height:16px;font-size:9.0px;font-weight:400;color:#2b2b2b;white-space:nowrap;transform:scaleY(1.1);right:298.20px;text-align:right;">49.1 %</div>
<div style="position:absolute;left:743.00px;top:541.00px;width:37.00px;height:9.50px;background:#d9283b;"></div>
<div style="position:absolute;top:538.00px;height:16px;line-height:16px;font-size:9.0px;font-weight:400;color:#2b2b2b;white-space:nowrap;transform:scaleY(1.1);left:781.40px;">(16.4 %)</div>
<div style="position:absolute;top:538.00px;height:16px;line-height:16px;font-size:9.0px;font-weight:400;color:#2b2b2b;white-space:nowrap;transform:scaleY(1.1);right:102.90px;text-align:right;">32.2 %</div>
<div style="position:absolute;top:538.00px;height:16px;line-height:16px;font-size:9.0px;font-weight:400;color:#2b2b2b;white-space:nowrap;transform:scaleY(1.1);right:20.40px;text-align:right;">$2,062,611</div>
<svg style="left:25.7px;top:558.3px" width="12.6" height="12.6" viewBox="-6.3 -6.3 12.6 12.6"><circle cx="0" cy="0" r="4.80" fill="none" stroke="#4a4a4a" stroke-width="1.05"/><rect x="-0.65" y="-3.29" width="1.3" height="1.25" fill="#4a4a4a"/><rect x="-0.65" y="-1.17" width="1.3" height="4.24" fill="#4a4a4a"/></svg>
<svg style="left:59.0px;top:560.0px" width="10" height="10" viewBox="0 0 10 10"><rect x="0.6" y="0.6" width="8.4" height="8.4" rx="1.3" fill="#fff" stroke="#2b85d6" stroke-width="1.1"/><path d="M2.4 4.8 H7.2 M4.8 2.4 V7.2" stroke="#2b85d6" stroke-width="1.2"/></svg>
<div style="position:absolute;top:557.00px;height:16px;line-height:16px;font-size:8.826px;font-weight:400;color:#2b2b2b;white-space:nowrap;transform:scaleY(1.1);left:72.70px;">Pro_Grp_B</div>
<div style="position:absolute;top:557.00px;height:16px;line-height:16px;font-size:8.648px;font-weight:400;color:#2b2b2b;white-space:nowrap;letter-spacing:-0.053px;transform:scaleY(1.1);left:147.90px;">(All)</div>
<div style="position:absolute;top:557.00px;height:16px;line-height:16px;font-size:9.0px;font-weight:400;color:#2b2b2b;white-space:nowrap;transform:scaleY(1.1);right:597.50px;text-align:right;">$17,002,470</div>
<div style="position:absolute;left:467.70px;top:560.00px;width:12.30px;height:9.50px;background:#d9283b;"></div>
<div style="position:absolute;top:557.00px;height:16px;line-height:16px;font-size:9.0px;font-weight:400;color:#2b2b2b;white-space:nowrap;transform:scaleY(1.1);left:482.40px;">$(3 m)</div>
<div style="position:absolute;top:557.00px;height:16px;line-height:16px;font-size:9.0px;font-weight:400;color:#2b2b2b;white-space:nowrap;transform:scaleY(1.1);right:388.10px;text-align:right;">$13,509,452</div>
<div style="position:absolute;top:557.00px;height:16px;line-height:16px;font-size:9.0px;font-weight:400;color:#2b2b2b;white-space:nowrap;transform:scaleY(1.1);right:298.20px;text-align:right;">48.1 %</div>
<div style="position:absolute;left:783.50px;top:560.00px;width:27.50px;height:9.50px;background:#0aa883;"></div>
<div style="position:absolute;top:557.00px;height:16px;line-height:16px;font-size:9.0px;font-weight:400;color:#2b2b2b;white-space:nowrap;transform:scaleY(1.1);right:242.20px;text-align:right;">(31.4 %)</div>
<div style="position:absolute;top:557.00px;height:16px;line-height:16px;font-size:9.0px;font-weight:400;color:#2b2b2b;white-space:nowrap;transform:scaleY(1.1);right:102.90px;text-align:right;">79.5 %</div>
<div style="position:absolute;top:557.00px;height:16px;line-height:16px;font-size:9.0px;font-weight:400;color:#2b2b2b;white-space:nowrap;transform:scaleY(1.1);right:20.40px;text-align:right;">$3,485,548</div>
<svg style="left:25.7px;top:577.3px" width="12.6" height="12.6" viewBox="-6.3 -6.3 12.6 12.6"><circle cx="0" cy="0" r="4.80" fill="none" stroke="#4a4a4a" stroke-width="1.05"/><rect x="-0.65" y="-3.29" width="1.3" height="1.25" fill="#4a4a4a"/><rect x="-0.65" y="-1.17" width="1.3" height="4.24" fill="#4a4a4a"/></svg>
<svg style="left:149.0px;top:579.0px" width="10" height="10" viewBox="0 0 10 10"><rect x="0.6" y="0.6" width="8.4" height="8.4" rx="1.3" fill="#fff" stroke="#2b85d6" stroke-width="1.1"/><path d="M2.4 4.8 H7.2 M4.8 2.4 V7.2" stroke="#2b85d6" stroke-width="1.2"/></svg>
<div style="position:absolute;top:576.00px;height:16px;line-height:16px;font-size:9.112px;font-weight:400;color:#2b2b2b;white-space:nowrap;transform:scaleY(1.1);left:163.00px;">B2B Direct</div>
<div style="position:absolute;top:576.00px;height:16px;line-height:16px;font-size:8.648px;font-weight:400;color:#2b2b2b;white-space:nowrap;letter-spacing:-0.053px;transform:scaleY(1.1);left:245.00px;">(All)</div>
<div style="position:absolute;top:576.00px;height:16px;line-height:16px;font-size:9.0px;font-weight:400;color:#2b2b2b;white-space:nowrap;transform:scaleY(1.1);right:597.50px;text-align:right;">$7,073,398</div>
<div style="position:absolute;left:463.00px;top:579.00px;width:17.00px;height:9.50px;background:#d9283b;"></div>
<div style="position:absolute;top:576.00px;height:16px;line-height:16px;font-size:9.0px;font-weight:400;color:#2b2b2b;white-space:nowrap;transform:scaleY(1.1);left:482.40px;">$(4 m)</div>
<div style="position:absolute;top:576.00px;height:16px;line-height:16px;font-size:9.0px;font-weight:400;color:#2b2b2b;white-space:nowrap;transform:scaleY(1.1);right:388.10px;text-align:right;">$3,531,331</div>
<div style="position:absolute;top:576.00px;height:16px;line-height:16px;font-size:9.0px;font-weight:400;color:#2b2b2b;white-space:nowrap;transform:scaleY(1.1);right:298.20px;text-align:right;">50.4 %</div>
<div style="position:absolute;left:736.00px;top:579.00px;width:44.00px;height:9.50px;background:#d9283b;"></div>
<div style="position:absolute;top:576.00px;height:16px;line-height:16px;font-size:9.0px;font-weight:400;color:#2b2b2b;white-space:nowrap;transform:scaleY(1.1);left:781.40px;">(18.2 %)</div>
<div style="position:absolute;top:576.00px;height:16px;line-height:16px;font-size:9.0px;font-weight:400;color:#2b2b2b;white-space:nowrap;transform:scaleY(1.1);right:102.90px;text-align:right;">32.2 %</div>
<div style="position:absolute;top:576.00px;height:16px;line-height:16px;font-size:9.0px;font-weight:400;color:#2b2b2b;white-space:nowrap;transform:scaleY(1.1);right:20.40px;text-align:right;">$7,447,681</div>
<svg style="left:25.7px;top:595.3px" width="12.6" height="12.6" viewBox="-6.3 -6.3 12.6 12.6"><circle cx="0" cy="0" r="4.80" fill="none" stroke="#4a4a4a" stroke-width="1.05"/><rect x="-0.65" y="-3.29" width="1.3" height="1.25" fill="#4a4a4a"/><rect x="-0.65" y="-1.17" width="1.3" height="4.24" fill="#4a4a4a"/></svg>
<svg style="left:149.0px;top:597.0px" width="10" height="10" viewBox="0 0 10 10"><rect x="0.6" y="0.6" width="8.4" height="8.4" rx="1.3" fill="#fff" stroke="#2b85d6" stroke-width="1.1"/><path d="M2.4 4.8 H7.2 M4.8 2.4 V7.2" stroke="#2b85d6" stroke-width="1.2"/></svg>
<div style="position:absolute;top:594.00px;height:16px;line-height:16px;font-size:9.107px;font-weight:400;color:#2b2b2b;white-space:nowrap;transform:scaleY(1.1);left:163.00px;">Retailers</div>
<div style="position:absolute;top:594.00px;height:16px;line-height:16px;font-size:9.0px;font-weight:400;color:#2b2b2b;white-space:nowrap;transform:scaleY(1.1);right:597.50px;text-align:right;">$5,123,456</div>
<div style="position:absolute;left:471.50px;top:597.00px;width:8.50px;height:9.50px;background:#d9283b;"></div>
<div style="position:absolute;top:594.00px;height:16px;line-height:16px;font-size:9.0px;font-weight:400;color:#2b2b2b;white-space:nowrap;transform:scaleY(1.1);left:482.40px;">$(2 m)</div>
<div style="position:absolute;top:594.00px;height:16px;line-height:16px;font-size:9.0px;font-weight:400;color:#2b2b2b;white-space:nowrap;transform:scaleY(1.1);right:388.10px;text-align:right;">$5,509,452</div>
<div style="position:absolute;top:594.00px;height:16px;line-height:16px;font-size:9.0px;font-weight:400;color:#2b2b2b;white-space:nowrap;transform:scaleY(1.1);right:298.20px;text-align:right;">48.1 %</div>
<div style="position:absolute;left:783.50px;top:597.00px;width:37.00px;height:9.50px;background:#0aa883;"></div>
<div style="position:absolute;top:594.00px;height:16px;line-height:16px;font-size:9.0px;font-weight:400;color:#2b2b2b;white-space:nowrap;transform:scaleY(1.1);right:242.20px;text-align:right;">(35.4 %)</div>
<div style="position:absolute;top:594.00px;height:16px;line-height:16px;font-size:9.0px;font-weight:400;color:#2b2b2b;white-space:nowrap;transform:scaleY(1.1);right:102.90px;text-align:right;">86.5 %</div>
<div style="position:absolute;top:594.00px;height:16px;line-height:16px;font-size:9.0px;font-weight:400;color:#2b2b2b;white-space:nowrap;transform:scaleY(1.1);right:20.40px;text-align:right;">$1,485,548</div>
<svg style="left:25.7px;top:614.3px" width="12.6" height="12.6" viewBox="-6.3 -6.3 12.6 12.6"><circle cx="0" cy="0" r="4.80" fill="none" stroke="#4a4a4a" stroke-width="1.05"/><rect x="-0.65" y="-3.29" width="1.3" height="1.25" fill="#4a4a4a"/><rect x="-0.65" y="-1.17" width="1.3" height="4.24" fill="#4a4a4a"/></svg>
<svg style="left:149.0px;top:616.0px" width="10" height="10" viewBox="0 0 10 10"><rect x="0.6" y="0.6" width="8.4" height="8.4" rx="1.3" fill="#fff" stroke="#2b85d6" stroke-width="1.1"/><path d="M2.4 4.8 H7.2 M4.8 2.4 V7.2" stroke="#2b85d6" stroke-width="1.2"/></svg>
<div style="position:absolute;top:613.00px;height:16px;line-height:16px;font-size:9.38px;font-weight:400;color:#2b2b2b;white-space:nowrap;letter-spacing:0.144px;transform:scaleY(1.1);left:163.00px;">Distributors</div>
<div style="position:absolute;top:613.00px;height:16px;line-height:16px;font-size:9.0px;font-weight:400;color:#2b2b2b;white-space:nowrap;transform:scaleY(1.1);right:597.50px;text-align:right;">$5,123,456</div>
<div style="position:absolute;left:471.50px;top:616.00px;width:8.50px;height:9.50px;background:#d9283b;"></div>
<div style="position:absolute;top:613.00px;height:16px;line-height:16px;font-size:9.0px;font-weight:400;color:#2b2b2b;white-space:nowrap;transform:scaleY(1.1);left:482.40px;">$(2 m)</div>
<div style="position:absolute;top:613.00px;height:16px;line-height:16px;font-size:9.0px;font-weight:400;color:#2b2b2b;white-space:nowrap;transform:scaleY(1.1);right:388.10px;text-align:right;">$5,509,452</div>
<div style="position:absolute;top:613.00px;height:16px;line-height:16px;font-size:9.0px;font-weight:400;color:#2b2b2b;white-space:nowrap;transform:scaleY(1.1);right:298.20px;text-align:right;">48.1 %</div>
<div style="position:absolute;left:783.50px;top:616.00px;width:37.00px;height:9.50px;background:#0aa883;"></div>
<div style="position:absolute;top:613.00px;height:16px;line-height:16px;font-size:9.0px;font-weight:400;color:#2b2b2b;white-space:nowrap;transform:scaleY(1.1);right:242.20px;text-align:right;">(35.4 %)</div>
<div style="position:absolute;top:613.00px;height:16px;line-height:16px;font-size:9.0px;font-weight:400;color:#2b2b2b;white-space:nowrap;transform:scaleY(1.1);right:102.90px;text-align:right;">86.5 %</div>
<div style="position:absolute;top:613.00px;height:16px;line-height:16px;font-size:9.0px;font-weight:400;color:#2b2b2b;white-space:nowrap;transform:scaleY(1.1);right:20.40px;text-align:right;">$1,485,548</div>
<svg style="left:10.6px;top:374.2px" width="13.8" height="13.8" viewBox="-6.9 -6.9 13.8 13.8"><circle cx="0" cy="0" r="5.40" fill="none" stroke="#2b7cc9" stroke-width="1.05"/><rect x="-0.65" y="-3.66" width="1.3" height="1.25" fill="#2b7cc9"/><rect x="-0.65" y="-1.30" width="1.3" height="4.72" fill="#2b7cc9"/></svg>
<svg width="1024" height="641" viewBox="0 0 1024 641" fill="none" stroke-linecap="butt">
<circle cx="17.3" cy="17.2" r="13.7" fill="#fff"/>
<g transform="translate(6 5.9) scale(0.469)"><path fill="#FF3D00" d="M24 9.5c3.54 0 6.71 1.22 9.21 3.6l6.85-6.85C35.9 2.38 30.47 0 24 0 14.62 0 6.51 5.38 2.56 13.22l7.98 6.19C12.43 13.72 17.74 9.5 24 9.5z"/><path fill="#1976D2" d="M46.98 24.55c0-1.57-.15-3.09-.38-4.55H24v9.02h12.94c-.58 2.96-2.26 5.48-4.78 7.18l7.73 6c4.51-4.18 7.09-10.36 7.09-17.65z"/><path fill="#FFC107" d="M10.53 28.59c-.48-1.45-.76-2.99-.76-4.59s.27-3.14.76-4.59l-7.98-6.19C.92 16.46 0 20.12 0 24c0 3.88.92 7.54 2.56 10.78l7.97-6.19z"/><path fill="#4CAF50" d="M24 48c6.48 0 11.93-2.13 15.89-5.81l-7.73-6c-2.15 1.45-4.92 2.3-8.16 2.3-6.26 0-11.57-4.22-13.47-9.91l-7.98 6.19C6.51 42.62 14.62 48 24 48z"/></g>
<rect x="45" y="12.100000000000001" width="13.25" height="1.4" fill="#fff"/>
<rect x="45" y="16.5" width="13.25" height="1.4" fill="#fff"/>
<rect x="45" y="21.2" width="13.25" height="1.4" fill="#fff"/>
<path d="M93.8 17 H79 M84.9 11.3 L78.9 17 L84.9 22.8" stroke="#fff" stroke-width="1.3"/>
<circle cx="126.1" cy="16" r="4.6" stroke="#e4eff8" stroke-width="1.2"/><path d="M129.4 19.4 L133 22.9" stroke="#e4eff8" stroke-width="1.3"/>
<rect x="451.2" y="11.6" width="15.2" height="11.6" stroke="#fff" stroke-width="1.4"/><rect x="453.7" y="18.6" width="10.2" height="4.6" stroke="#fff" stroke-width="1.2"/><path d="M455.5 20.9 h2 M458.3 20.9 h1.2 M460.4 20.9 h1.4" stroke="#fff" stroke-width="1"/>
<rect x="723.8" y="10.1" width="3.45" height="3.45" fill="#fff"/>
<rect x="723.8" y="15.6" width="3.45" height="3.45" fill="#fff"/>
<rect x="723.8" y="21.0" width="3.45" height="3.45" fill="#fff"/>
<rect x="729.2" y="10.1" width="3.45" height="3.45" fill="#fff"/>
<rect x="729.2" y="15.6" width="3.45" height="3.45" fill="#fff"/>
<rect x="729.2" y="21.0" width="3.45" height="3.45" fill="#fff"/>
<rect x="734.6" y="10.1" width="3.45" height="3.45" fill="#fff"/>
<rect x="734.6" y="15.6" width="3.45" height="3.45" fill="#fff"/>
<rect x="734.6" y="21.0" width="3.45" height="3.45" fill="#fff"/>
<path d="M771.3 18.5 V13.2 L766.8 8.9 H759.4 V24.3 H768.6" stroke="#fff" stroke-width="1.2"/><path d="M766.8 8.9 V13.2 H771.3" stroke="#fff" stroke-width="1"/><path d="M771.3 19 V24" stroke="#fff" stroke-width="1.1"/><path d="M769.3 23.2 H773.3 L771.3 25.6Z" fill="#fff"/>
<text x="761" y="19.6" font-family="Liberation Sans, sans-serif" font-size="5" font-weight="700" fill="#d5e6f5" textLength="8.6" lengthAdjust="spacingAndGlyphs">PDF</text>
<path d="M800.9 12 H791.8 V23.6 H805.6 V16.7" stroke="#fff" stroke-width="1.3"/><path d="M802.3 11.7 H809.2 M805.7 8.2 V15.2" stroke="#fff" stroke-width="1.2"/><path d="M793.6 17.7 Q798.7 12.2 803.8 17.7 Q798.7 23.2 793.6 17.7Z" stroke="#fff" stroke-width="1"/><circle cx="798.7" cy="17.7" r="1.3" fill="#fff"/>
<path d="M835.7 12 H826.8 V23.6 H840.4 V16.7" stroke="#fff" stroke-width="1.3"/><path d="M837.2 11.7 H844 M840.6 8.2 V15.2" stroke="#fff" stroke-width="1.2"/><rect x="828.6" y="14.6" width="9.6" height="2.5" fill="#fff"/><rect x="828.6" y="19" width="9.6" height="2.7" fill="#fff"/>
<path d="M869.8 12 H860.7 V23 H877 V17" stroke="#fff" stroke-width="1.3"/><circle cx="874.2" cy="13.6" r="2.9" stroke="#fff" stroke-width="1.1"/><circle cx="874.2" cy="13.6" r="0.9" fill="#fff"/><path d="M862.3 17.3 H865.1 L866.4 14.8 L868.4 19.9 L869.8 17.3 H871.2" stroke="#fff" stroke-width="1"/>
<path d="M895.9 16 A7.4 7.4 0 0 1 909.6 12.6" stroke="#fff" stroke-width="1.3"/><path d="M910.6 18.6 A7.4 7.4 0 0 1 896.9 22" stroke="#fff" stroke-width="1.3"/><path d="M911 10.6 V15.2 H906.4Z" fill="#fff"/><path d="M895.5 24 V19.4 H900.1Z" fill="#fff"/>
<path d="M931 23 H944.8 M933 23 V15.2 C933 11.5 935 9 937.9 9 C940.8 9 942.8 11.5 942.8 15.2 V23" stroke="#fff" stroke-width="1.3"/><circle cx="937.9" cy="24.3" r="1.5" stroke="#fff" stroke-width="1.1"/>
<rect x="939.2" y="6" width="14.2" height="10" rx="5" fill="#ef6c14"/>
<text x="946.3" y="14" text-anchor="middle" font-family="Liberation Sans, sans-serif" font-size="8" font-weight="700" fill="#fff">19</text>
<path d="M967.9 23.8 L966.7 23.2 L966.6 21.3 L965.9 20.6 L964.0 20.4 L963.5 19.2 L964.5 17.7 L964.3 16.6 L962.9 15.4 L963.2 14.1 L964.9 13.4 L965.4 12.5 L965.0 10.7 L965.9 9.8 L967.7 10.2 L968.7 9.8 L969.4 8.1 L970.7 7.9 L971.9 9.3 L973.0 9.5 L974.5 8.6 L975.7 9.2 L975.8 11.1 L976.5 11.8 " stroke="#fff" stroke-width="1.1" stroke-linejoin="round"/>
<path d="M968.2 17.6 A3.2 3.2 0 0 1 974 15" stroke="#fff" stroke-width="1.1"/>
<g transform="translate(969.6 25.3) rotate(-41.5)"><path d="M0 0 L2.6 -1.7 H15 V1.7 H2.6Z M12.4 -1.7 V1.7" stroke="#fff" stroke-width="1.1" stroke-linejoin="round"/></g>
<defs><linearGradient id="av" x1="0" x2="1" y1="0" y2="0"><stop offset="0" stop-color="#94466f"/><stop offset="1" stop-color="#c6524a"/></linearGradient><clipPath id="avc"><circle cx="1006.9" cy="17.1" r="12.2"/></clipPath></defs>
<circle cx="1006.9" cy="17.1" r="12.6" fill="url(#av)" stroke="#d9a9b5" stroke-width="0.8"/>
<g clip-path="url(#avc)"><ellipse cx="1006.7" cy="27.8" rx="6.8" ry="5.2" fill="#86c5c8"/><rect x="1005.4" y="19.5" width="2.8" height="4" fill="#eab48f"/><ellipse cx="1006.7" cy="16.4" rx="3.7" ry="4.6" fill="#f3cfae"/><path d="M1002.8 14.6 Q1003 10 1006.7 9.8 Q1010.6 10 1010.6 14.6 Q1008.8 12.2 1006.7 12.6 Q1004.6 12.2 1002.8 14.6Z" fill="#e8742c"/></g>
<path d="M6.6 46.8 L10 50.3 L6.6 53.8" stroke="#3f87cf" stroke-width="1.4"/>
<path d="M488.8 45.5 H497.59999999999997 L494.8 50.4 V53.6 L492.2 54.9 V50.4Z" stroke="#444" stroke-width="0.85" stroke-linejoin="round"/>
<path d="M581.2 45.5 H590.0 L587.2 50.4 V53.6 L584.6 54.9 V50.4Z" stroke="#444" stroke-width="0.85" stroke-linejoin="round"/>
<path d="M674.6 45.5 H683.4 L680.6 50.4 V53.6 L678 54.9 V50.4Z" stroke="#444" stroke-width="0.85" stroke-linejoin="round"/>
<path d="M767.7 45.5 H776.5 L773.7 50.4 V53.6 L771.1 54.9 V50.4Z" stroke="#444" stroke-width="0.85" stroke-linejoin="round"/>
<path d="M953.5 45.5 H962.3 L959.5 50.4 V53.6 L956.9 54.9 V50.4Z" stroke="#444" stroke-width="0.85" stroke-linejoin="round"/>
<rect x="856" y="44.9" width="13.8" height="10" rx="0.8" fill="#ee7f88"/><rect x="856" y="44.9" width="6" height="5" fill="#4f6b99"/>
<rect x="862" y="45.9" width="7.8" height="0.7" fill="#f6a3a9"/>
<rect x="862" y="47.9" width="7.8" height="0.7" fill="#f6a3a9"/>
<rect x="856" y="49.9" width="13.8" height="0.7" fill="#f6a3a9"/>
<rect x="856" y="51.9" width="13.8" height="0.7" fill="#f6a3a9"/>
<rect x="856" y="53.9" width="13.8" height="0.7" fill="#f6a3a9"/>
<polygon points="991.00,45.90 992.18,48.98 995.47,49.15 992.90,51.22 993.76,54.40 991.00,52.60 988.24,54.40 989.10,51.22 986.53,49.15 989.82,48.98" fill="#0a6fbf"/>
<rect x="1005.1" y="45.800000000000004" width="1.8" height="1.8" fill="#333"/>
<rect x="1005.1" y="49.300000000000004" width="1.8" height="1.8" fill="#333"/>
<rect x="1005.1" y="52.7" width="1.8" height="1.8" fill="#333"/>
<path d="M856.5 118.5 H862.2 L859.35 121.6Z" fill="#333"/>
<path d="M767.3 380.2 H772.8 L770.05 383Z" fill="#333"/>
<path d="M856.1 380.2 H861.9 L859.0 383Z" fill="#333"/>
<path d="M934.2 380.2 H940.2 L937.2 383Z" fill="#333"/>
<path d="M883.2 121.5 H888.6 M886.6 119.3 L889 121.5 L886.6 123.7" stroke="#333" stroke-width="1.05"/><path d="M894.9 118.4 H889.6 M891.6 116.2 L889.2 118.4 L891.6 120.6" stroke="#333" stroke-width="1.05"/>
<rect x="961.5" y="115.1" width="11" height="2.6" stroke="#333" stroke-width="1"/><rect x="961.5" y="119.8" width="3.2" height="5.2" stroke="#333" stroke-width="1"/><rect x="966.7" y="119.8" width="5.8" height="5.2" stroke="#333" stroke-width="1"/>
<rect x="961.5" y="376.8" width="11" height="2.6" stroke="#333" stroke-width="1"/><rect x="961.5" y="381.5" width="3.2" height="5.2" stroke="#333" stroke-width="1"/><rect x="966.7" y="381.5" width="5.8" height="5.2" stroke="#333" stroke-width="1"/>
<path d="M707 375.9 V383.6 M703.7 380.6 L707 383.9 L710.3 380.6 M701.4 383 V386.5 H712.5 V383" stroke="#333" stroke-width="1.1"/>
<path d="M804 380 V376.2 H794.2 V385.2 H798.5 M794.2 378.3 H804 M797 380.3 V383.2 M799.3 380.3 V383.2" stroke="#333" stroke-width="1"/><path d="M800 386.8 L800.6 384.3 L804.6 380.3 L806.1 381.8 L802.1 385.9Z" stroke="#333" stroke-width="0.9" stroke-linejoin="round"/>
<path d="M884.6 379.2 H893.3 L889.9 383.2 V386 L888 386.8 V383.2Z" stroke="#333" stroke-width="1" stroke-linejoin="round"/><circle cx="886.9" cy="376.3" r="0.7" fill="#333"/><circle cx="891" cy="376.3" r="0.7" fill="#333"/><circle cx="889" cy="377.6" r="0.6" fill="#333"/>
<path d="M133.6 429.5 V438 M132 436.3 L133.6 438.2 L135.2 436.3" stroke="#888" stroke-width="0.9"/><path d="M138 438.3 V429.6 M136.3 431.6 L138 429.5 L139.7 431.6" stroke="#444" stroke-width="1"/>
</svg>
</div></body></html>
